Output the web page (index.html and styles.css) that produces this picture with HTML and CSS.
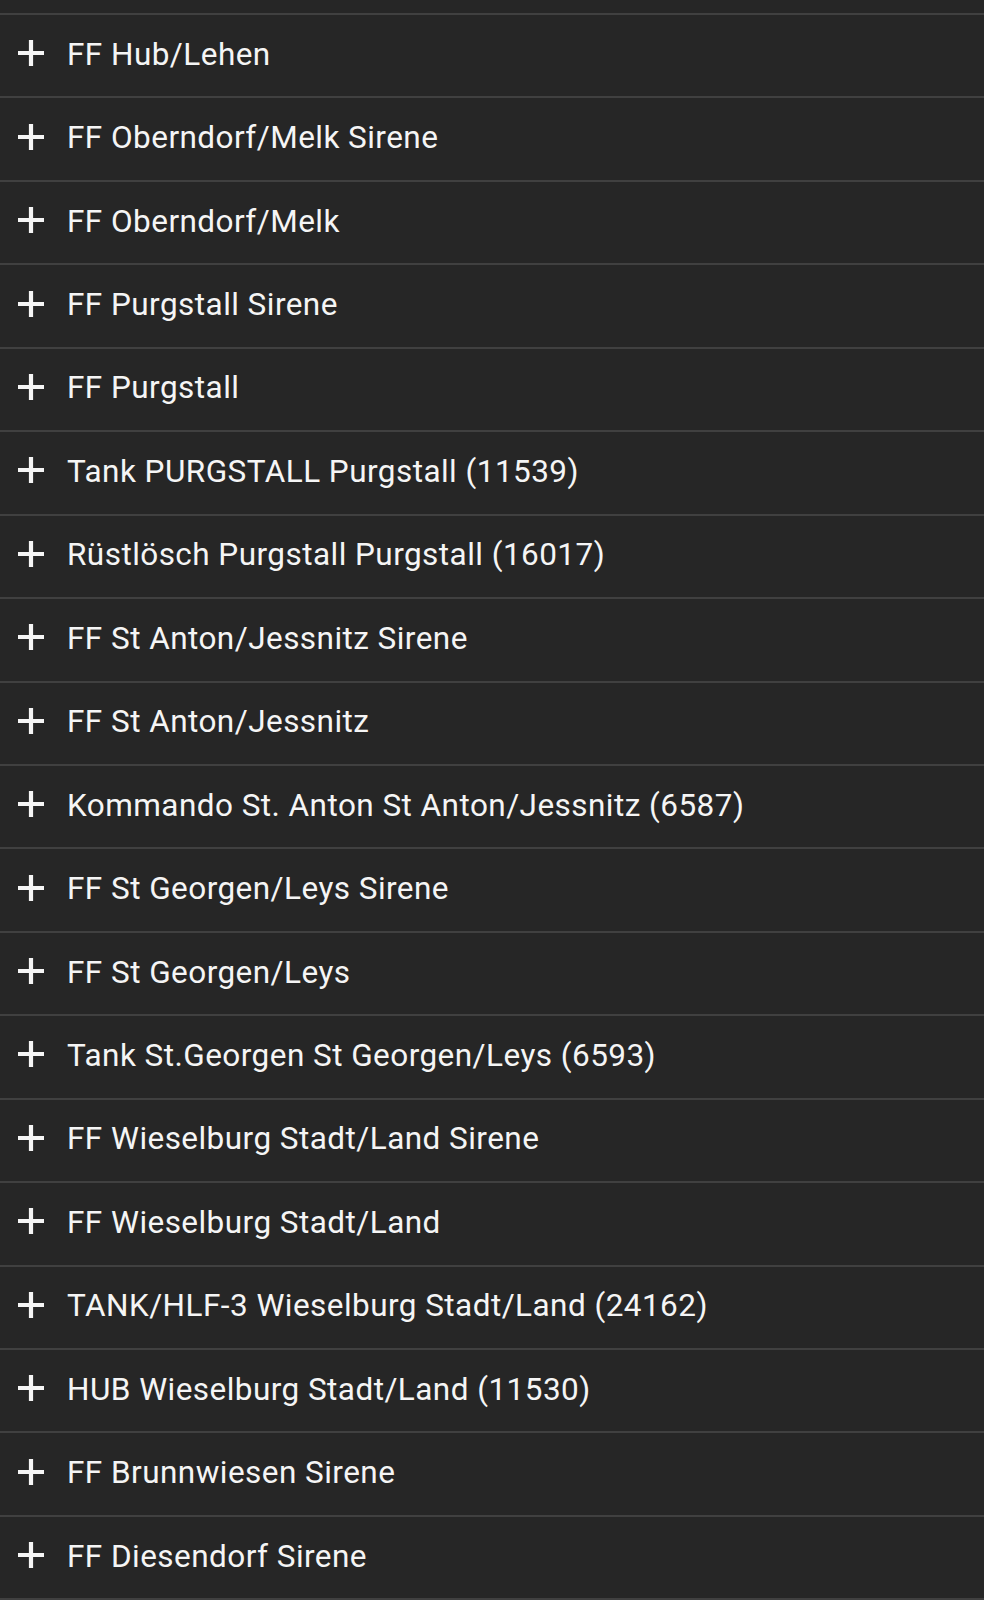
FILE: index.html
```html
<!DOCTYPE html>
<html lang="en">
<head>
  <meta charset="UTF-8">
  <meta name="viewport" content="width=device-width, initial-scale=1.0">
  <title>Einheiten</title>
  <link rel="stylesheet" href="styles.css">
</head>
<body>

  <!-- previous item, scrolled out of view -->
  <div class="list-top"></div>

  <ul class="unit-list">
    <li class="unit-row"><svg class="plus" viewBox="0 0 26 26"><path d="M13 0v26M0 13h26"/></svg><span class="unit-name">FF Hub/Lehen</span></li>
    <li class="unit-row"><svg class="plus" viewBox="0 0 26 26"><path d="M13 0v26M0 13h26"/></svg><span class="unit-name">FF Oberndorf/Melk Sirene</span></li>
    <li class="unit-row"><svg class="plus" viewBox="0 0 26 26"><path d="M13 0v26M0 13h26"/></svg><span class="unit-name">FF Oberndorf/Melk</span></li>
    <li class="unit-row"><svg class="plus" viewBox="0 0 26 26"><path d="M13 0v26M0 13h26"/></svg><span class="unit-name">FF Purgstall Sirene</span></li>
    <li class="unit-row"><svg class="plus" viewBox="0 0 26 26"><path d="M13 0v26M0 13h26"/></svg><span class="unit-name">FF Purgstall</span></li>
    <li class="unit-row"><svg class="plus" viewBox="0 0 26 26"><path d="M13 0v26M0 13h26"/></svg><span class="unit-name">Tank PURGSTALL Purgstall (11539)</span></li>
    <li class="unit-row"><svg class="plus" viewBox="0 0 26 26"><path d="M13 0v26M0 13h26"/></svg><span class="unit-name">Rüstlösch Purgstall Purgstall (16017)</span></li>
    <li class="unit-row"><svg class="plus" viewBox="0 0 26 26"><path d="M13 0v26M0 13h26"/></svg><span class="unit-name">FF St Anton/Jessnitz Sirene</span></li>
    <li class="unit-row"><svg class="plus" viewBox="0 0 26 26"><path d="M13 0v26M0 13h26"/></svg><span class="unit-name">FF St Anton/Jessnitz</span></li>
    <li class="unit-row"><svg class="plus" viewBox="0 0 26 26"><path d="M13 0v26M0 13h26"/></svg><span class="unit-name">Kommando St. Anton St Anton/Jessnitz (6587)</span></li>
    <li class="unit-row"><svg class="plus" viewBox="0 0 26 26"><path d="M13 0v26M0 13h26"/></svg><span class="unit-name">FF St Georgen/Leys Sirene</span></li>
    <li class="unit-row"><svg class="plus" viewBox="0 0 26 26"><path d="M13 0v26M0 13h26"/></svg><span class="unit-name">FF St Georgen/Leys</span></li>
    <li class="unit-row"><svg class="plus" viewBox="0 0 26 26"><path d="M13 0v26M0 13h26"/></svg><span class="unit-name">Tank St.Georgen St Georgen/Leys (6593)</span></li>
    <li class="unit-row"><svg class="plus" viewBox="0 0 26 26"><path d="M13 0v26M0 13h26"/></svg><span class="unit-name">FF Wieselburg Stadt/Land Sirene</span></li>
    <li class="unit-row"><svg class="plus" viewBox="0 0 26 26"><path d="M13 0v26M0 13h26"/></svg><span class="unit-name">FF Wieselburg Stadt/Land</span></li>
    <li class="unit-row"><svg class="plus" viewBox="0 0 26 26"><path d="M13 0v26M0 13h26"/></svg><span class="unit-name">TANK/HLF-3 Wieselburg Stadt/Land (24162)</span></li>
    <li class="unit-row"><svg class="plus" viewBox="0 0 26 26"><path d="M13 0v26M0 13h26"/></svg><span class="unit-name">HUB Wieselburg Stadt/Land (11530)</span></li>
    <li class="unit-row"><svg class="plus" viewBox="0 0 26 26"><path d="M13 0v26M0 13h26"/></svg><span class="unit-name">FF Brunnwiesen Sirene</span></li>
    <li class="unit-row"><svg class="plus" viewBox="0 0 26 26"><path d="M13 0v26M0 13h26"/></svg><span class="unit-name">FF Diesendorf Sirene</span></li>
  </ul>

</body>
</html>
```

FILE: styles.css
```css
body {
  margin: 0;
  background-color: #262626;
  font-family: Roboto, "Noto Sans", sans-serif;
  color: #f5f5f5;
}

.list-top {
  height: 13px;
  border-bottom: 2px solid #404040;
}

.unit-list {
  list-style: none;
  margin: 0;
  padding: 0;
}

.unit-row {
  display: flex;
  align-items: center;
  gap: 23px;
  height: 81.45px;
  box-sizing: content-box;
  padding: 0 0 0 18px;
  border-bottom: 2px solid #404040;
}

.plus {
  width: 26px;
  height: 26px;
  flex-shrink: 0;
  margin-bottom: 5px;
  stroke: #f5f5f5;
  stroke-width: 4.2;
  fill: none;
}

.unit-name {
  font-size: 31.5px;
  line-height: 36px;
  letter-spacing: 0.45px;
  margin-bottom: 2px;
  white-space: nowrap;
}
```
